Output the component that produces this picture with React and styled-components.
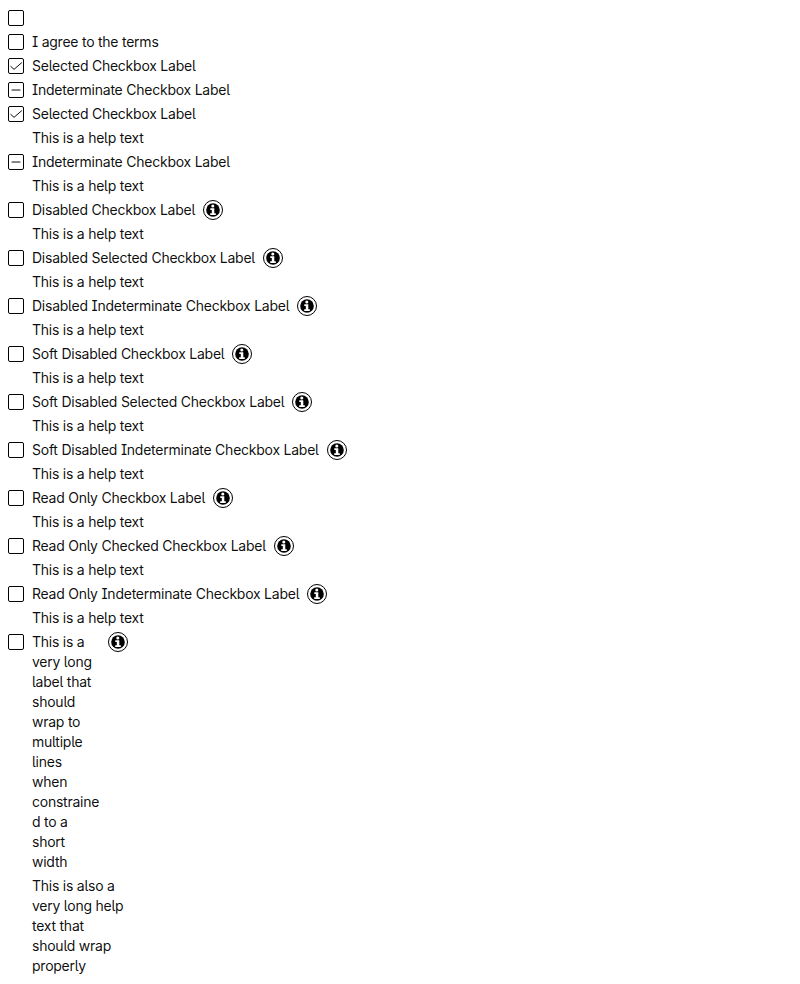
import React from "react";
import styled, { createGlobalStyle } from "styled-components";

const GlobalStyle = createGlobalStyle`
  body {
    margin: 8px;
    background: #fff;
    color: rgba(0, 0, 0, 0.95);
    font-family: Inter, "Liberation Sans", sans-serif;
    font-size: 14px;
    line-height: 20px;
    letter-spacing: -0.24px;
    font-feature-settings: "ss02";
  }
`;

const Stack = styled.main`
  display: flex;
  flex-direction: column;
  align-items: flex-start;
  gap: 4px;
`;

const Field = styled.div`
  display: flex;
  flex-direction: column;
  gap: 4px;
  width: ${(p) => p.$width || "auto"};
`;

const Row = styled.div`
  display: flex;
  align-items: flex-start;
  gap: 8px;
  min-height: 20px;
`;

const Box = styled.button`
  display: flex;
  flex: none;
  width: 16px;
  height: 16px;
  margin: 2px 0;
  padding: 0;
  box-sizing: border-box;
  border: 1px solid #000;
  border-radius: 2px;
  background: #fff;
  color: rgba(0, 0, 0, 0.95);

  svg {
    width: 14px;
    height: 14px;
  }
`;

const Label = styled.label`
  min-width: 0;
  overflow-wrap: anywhere;
`;

const Help = styled.div`
  padding-left: 24px;
`;

const InfoButton = styled.button`
  display: flex;
  align-items: center;
  justify-content: center;
  flex: none;
  width: 20px;
  height: 20px;
  padding: 0;
  box-sizing: border-box;
  border: 1px solid #000;
  border-radius: 50%;
  background: #fff;
`;

const Mark = ({ state }) => (
  <svg viewBox="0 0 14 14" fill="none" stroke="currentColor" strokeLinecap="round" strokeLinejoin="round">
    {state === "checked" ? <path d="M1.8 7.4 5 10.4 12.6 3.8" strokeWidth="1" /> : <path d="M3 7h8" strokeWidth="1.1" />}
  </svg>
);

const InfoIcon = () => (
  <svg width="14" height="14" viewBox="0 0 14 14">
    <circle cx="7" cy="7" r="6.8" fill="#000" />
    <circle cx="6.8" cy="3" r="1.55" fill="#fff" />
    <path d="M4.3 5.2h4v5h1.5v1.7H4.2v-1.7h1.6V6.9H4.3z" fill="#fff" />
  </svg>
);

const Checkbox = ({ label, help, state, info, width }) => (
  <Field $width={width}>
    <Row>
      <Box type="button" role="checkbox" aria-label={label || "Checkbox"} aria-checked={state === "checked" ? true : state ? "mixed" : false}>
        {state && <Mark state={state} />}
      </Box>
      {label && <Label>{label}</Label>}
      {info && (
        <InfoButton type="button" aria-label="More information">
          <InfoIcon />
        </InfoButton>
      )}
    </Row>
    {help && <Help>{help}</Help>}
  </Field>
);

const HELP = "This is a help text";

const fields = [
  {},
  { label: "I agree to the terms" },
  { label: "Selected Checkbox Label", state: "checked" },
  { label: "Indeterminate Checkbox Label", state: "mixed" },
  { label: "Selected Checkbox Label", state: "checked", help: HELP },
  { label: "Indeterminate Checkbox Label", state: "mixed", help: HELP },
  ...[
    "Disabled",
    "Disabled Selected",
    "Disabled Indeterminate",
    "Soft Disabled",
    "Soft Disabled Selected",
    "Soft Disabled Indeterminate",
    "Read Only",
    "Read Only Checked",
    "Read Only Indeterminate",
  ].map((name) => ({ label: `${name} Checkbox Label`, help: HELP, info: true })),
  {
    label: "This is a very long label that should wrap to multiple lines when constrained to a short width",
    help: "This is also a very long help text that should wrap properly",
    info: true,
    width: "120px",
  },
];

export default function App() {
  return (
    <>
      <GlobalStyle />
      <Stack>
        {fields.map((field, i) => (
          <Checkbox key={i} {...field} />
        ))}
      </Stack>
    </>
  );
}
